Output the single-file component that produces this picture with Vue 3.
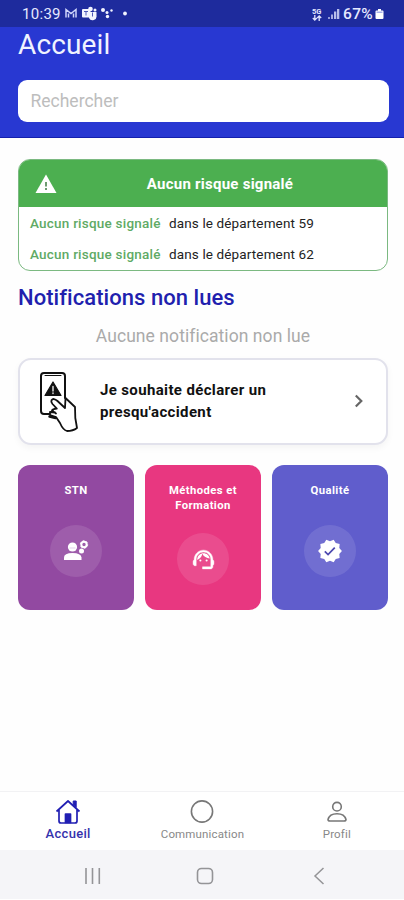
<script setup>
const departments = [59, 62]
const tiles = [
  { id: 'stn', title: 'STN' },
  { id: 'methods', title: 'Méthodes et Formation' },
  { id: 'quality', title: 'Qualité' },
]
</script>

<template>
  <div class="phone">
    <div class="status">
      <span class="clock">10:39</span>
      <svg class="notif-icons" width="66" height="16" viewBox="0 0 66 16">
        <g fill="none" stroke="#cfd5fb" stroke-width="1.500">
          <path d="M2 12.500V4.500l5 4 5-4v8M4.500 12.500V8.500M9.500 12.500V8.500" />
        </g>
        <g fill="#f2f4ff">
          <rect x="18" y="4" width="8.500" height="8.500" rx="1" />
          <circle cx="26.500" cy="4" r="2.300" />
          <circle cx="31" cy="5" r="1.500" />
          <path d="M25 7h7.500v3.500a4 4 0 0 1-7.500 2.500z" />
          <circle cx="39" cy="5" r="2" />
          <circle cx="43" cy="7.500" r="1.500" />
          <circle cx="47.500" cy="5.500" r="1.200" />
          <circle cx="43.500" cy="11.500" r="1.700" />
          <circle cx="61" cy="8.500" r="1.900" />
        </g>
        <path d="M20 6.500h4M22 6.500v4M28.500 7.500v4" stroke="#4d59b8" stroke-width="1" />
      </svg>
      <div class="status-right">
        <div class="network">
          <span>5G</span>
          <svg width="10" height="6" viewBox="0 0 10 6" fill="none" stroke="#dfe3ff" stroke-width="1.300"><path d="M2.800 0v5M.8 3l2 2 2-2M7.200 6V1M5.200 3l2-2 2 2" /></svg>
        </div>
        <svg width="13" height="12" viewBox="0 0 13 12" fill="#dfe3ff">
          <rect x="1" y="9" width="2" height="2" opacity=".6" />
          <rect x="4" y="6.500" width="2" height="4.500" opacity=".7" />
          <rect x="7" y="3.500" width="2.300" height="7.500" opacity=".8" />
          <rect x="10" y="1" width="2.300" height="10" opacity=".8" />
        </svg>
        <span class="percent">67%</span>
        <svg width="9" height="12" viewBox="0 0 9 12">
          <path d="M3 1h3v1.500h1.500q1 0 1 1V10q0 1-1 1h-6q-1 0-1-1V3.500q0-1 1-1H3z" fill="#fff" />
          <path d="M1.500 3.500h6V5h-6z" fill="#a9b1ec" />
        </svg>
      </div>
    </div>

    <header>
      <h1><span>Accueil</span></h1>
      <div class="search"><span>Rechercher</span></div>
    </header>

    <main>
      <section class="alert">
        <div class="alert-head">
          <svg width="22" height="20" viewBox="0 0 22 20">
            <path d="M11 .6 21.500 19H.5z" fill="#fff" />
            <path d="M11 8v4.500M11 14v2" stroke="#6d9a70" stroke-width="2" />
          </svg>
          <strong>Aucun risque signalé</strong>
        </div>
        <div v-for="d in departments" :key="d" class="alert-row">
          <b>Aucun risque signalé</b><span>dans le département {{ d }}</span>
        </div>
      </section>

      <h2><span>Notifications non lues</span></h2>
      <p class="empty"><span>Aucune notification non lue</span></p>

      <section class="declare">
        <svg class="hand" width="42" height="62" viewBox="0 0 42 62" fill="none" stroke="#111" stroke-linecap="round" stroke-linejoin="round">
          <path d="M27 28V6q0-3-3-3H6Q3 3 3 6v35q0 3 3 3h9" stroke-width="2" />
          <path d="M7 5.500h16" stroke-width="1" />
          <path d="M15 12 23 25.500H7z" fill="#111" stroke-width="1.200" />
          <path d="M15 16.500v4.500M15 22.800v.8" stroke="#fff" stroke-width="1.300" />
          <path d="M27.500 28l9.500 9 .3 11 1.700 10q-4 3-10 3-4-1-7-8l-4-6-6-2v-3l5 .5M27.500 28l-.5 10-7.500-7q-4-3.500-6-.8-.8 1.700 1 3.800l4.300 4.500q-4 .5-4.800 2l4 3" fill="#fff" stroke-width="1.800" />
          <path d="M11.500 46.500l6 1.500" stroke-width="2.500" />
        </svg>
        <strong>Je souhaite déclarer un<br />presqu'accident</strong>
        <svg width="10" height="14" viewBox="0 0 10 14" fill="none" stroke="#666" stroke-width="2.200">
          <path d="M1.800 1.500 7.300 7 1.800 12.500" />
        </svg>
      </section>

      <section class="tiles">
        <article v-for="t in tiles" :key="t.id" :class="t.id">
          <h3>{{ t.title }}</h3>
          <div class="disc">
            <svg v-if="t.id === 'stn'" width="26" height="22" viewBox="0 0 26 22" fill="#fff">
              <circle cx="9.500" cy="7" r="4.600" />
              <path d="M1 20v-2.500Q1 13 9.500 13t9 4.500V20z" />
              <circle cx="21" cy="4.500" r="2.700" fill="none" stroke="#fff" stroke-width="2" />
              <circle cx="21" cy="4.500" r="3.700" fill="none" stroke="#fff" stroke-width="1" stroke-dasharray="1.900 1.970" />
              <circle cx="18.500" cy="11" r="2.500" />
              <path d="M6.500 8h6" stroke="#dcc5e6" stroke-width=".8" />
            </svg>
            <svg v-else-if="t.id === 'methods'" width="25" height="25" viewBox="0 0 24 24" fill="#fff">
              <path d="M21 12.220C21 6.730 16.740 3 12 3c-4.690 0-9 3.650-9 9.280-.6.340-1 .98-1 1.720v2c0 1.100.9 2 2 2h1v-6.100C5 8.030 8.130 4.900 12 4.900s7 3.130 7 7V19h-8v2h8c1.100 0 2-.9 2-2v-1.220c.59-.31 1-.92 1-1.640v-2.300c0-.7-.41-1.310-1-1.620z" stroke="#fff" stroke-width=".4" />
              <circle cx="9" cy="13" r="1" /><circle cx="15" cy="13" r="1" />
              <path d="M18 11.030C17.520 8.180 15.040 6 12.050 6 9.020 6 5.760 8.510 6.020 12.450A8.070 8.070 0 0 0 10.880 6.560C12.190 9.190 14.880 11 18 11.030z" />
            </svg>
            <svg v-else width="26" height="26" viewBox="0 0 24 24">
              <path fill="#fff" d="m23 12-2.440-2.780.34-3.680-3.610-.82-1.890-3.180L12 3 8.600 1.540 6.710 4.720l-3.610.81.340 3.680L1 12l2.440 2.780-.34 3.690 3.610.82 1.890 3.180L12 21l3.400 1.460 1.890-3.180 3.610-.82-.34-3.680z" />
              <path d="m7.200 12.300 3 3 6.200-6.500" fill="none" stroke="#4d49b0" stroke-width="1.600" />
            </svg>
          </div>
        </article>
      </section>
    </main>

    <nav class="tabs">
      <div class="tab active">
        <svg width="26" height="26" viewBox="0 0 26 26" fill="none" stroke="#211fb3" stroke-width="1.700" stroke-linejoin="round">
          <path d="M1.500 12.500 13 2l11.500 10.500M4 11v11q0 2 2 2h14q2 0 2-2V11" />
          <path d="M18.200 2h3v6.500l-3-2.700z" fill="#211fb3" stroke-width="1" />
          <path d="M10.500 15h5v8.500h-5z" fill="#211fb3" />
        </svg>
        <span>Accueil</span>
      </div>
      <div class="tab">
        <svg width="26" height="26" viewBox="0 0 26 26" fill="none" stroke="#777" stroke-width="1.600"><circle cx="13" cy="12.500" r="10.600" /></svg>
        <span>Communication</span>
      </div>
      <div class="tab">
        <svg width="26" height="26" viewBox="0 0 26 26" fill="none" stroke="#777" stroke-width="1.600" stroke-linejoin="round">
          <circle cx="13" cy="7.700" r="4.300" />
          <path d="M6 22q-2 0-2-1.500C5 16.500 9 14.700 13 14.700s8 1.800 9 5.800q0 1.500-2 1.500z" />
        </svg>
        <span>Profil</span>
      </div>
    </nav>

    <footer class="system">
      <svg width="18" height="18" viewBox="0 0 18 18" stroke="#949497" stroke-width="1.600"><path d="M2 1v16M8.500 1v16M15.300 1v16" /></svg>
      <svg width="18" height="18" viewBox="0 0 18 18" fill="none" stroke="#949497" stroke-width="1.600"><rect x="1.500" y="1.500" width="15" height="15" rx="4" /></svg>
      <svg width="12" height="18" viewBox="0 0 12 18" fill="none" stroke="#949497" stroke-width="1.500"><path d="M10.500 1 2 9l8.500 8" /></svg>
    </footer>
  </div>
</template>

<style>
body { background: #fefefe; }
</style>

<style scoped>
* { box-sizing: border-box; }
h1, h2, h3, p { margin: 0; font-weight: 400; }
svg { display: block; flex: none; }
.phone { height: 900px; display: flex; flex-direction: column; font-family: Roboto, "Liberation Sans", sans-serif; color: #222; white-space: nowrap; overflow: hidden; background: #fefefe; }
.status { height: 27px; flex: none; display: flex; align-items: center; padding: 1px 20px 0 22px; background: #1e2b9d; color: #e6e9ff; }
.clock { width: 42px; font-size: 15px; letter-spacing: .3px; }
.notif-icons { margin-top: -2px; }
.status-right { margin-left: auto; display: flex; align-items: center; gap: 4px; }
.network { width: 11px; font-size: 7.500px; line-height: 7px; font-weight: 700; }
.network span { display: block; }
.percent { font-size: 15.500px; letter-spacing: .3px; font-weight: 500; margin: 0 -2px 0 -1px; }
header { height: 111px; flex: none; background: #2838d2; padding: 0 15px 0 18px; border-bottom: 1px solid #1420ad; }
h1 { height: 53px; padding-top: 1px; font-size: 28px; line-height: 34px; letter-spacing: .15px; color: #f0f3ff; }
.search { height: 42px; border-radius: 9px; background: #fff; padding: 0 12.500px; color: #bdbdbd; font-size: 17.500px; line-height: 42px; }
main { flex: 1; padding: 21px 16px 0 18px; }
.alert { height: 112px; border: 1px solid #7bb981; border-radius: 12px; overflow: hidden; background: #fff; }
.alert-head { height: 47px; display: flex; align-items: center; padding-left: 16px; background: #4caf50; color: #fff; }
.alert-head strong { flex: 1; text-align: center; font-size: 15px; letter-spacing: .25px; padding-left: 17px; margin-right: 21px; }
.alert-row { height: 31px; display: flex; align-items: center; padding-left: 11px; font-size: 13.500px; letter-spacing: .13px; }
.alert-row b { width: 139px; color: #60aa65; font-weight: 500; letter-spacing: .22px; }
h2 { margin-top: 12px; height: 30px; line-height: 30px; font-size: 22px; font-weight: 500; letter-spacing: .05px; color: #211fae; }
.empty { margin-top: 8px; height: 30px; line-height: 30px; font-size: 17.500px; letter-spacing: .07px; color: #aaa; text-align: center; }
.declare { margin-top: 7px; height: 87px; border: 2px solid #e2e2ec; border-radius: 13px; background: #fff; box-shadow: 0 3px 7px #0000000b; display: flex; align-items: center; padding: 0 22px 2px 18px; }
.declare strong { flex: 1; padding-left: 20px; font-size: 15px; line-height: 22px; letter-spacing: .36px; color: #111; }
.tiles { margin-top: 20px; display: grid; grid-template-columns: repeat(3, 116px); gap: 11px; }
article { height: 145px; border-radius: 12px; display: flex; flex-direction: column; align-items: center; padding-top: 18px; color: #fff; }
.stn { background: #9249a1; }
.methods { background: #e83780; }
.quality { background: #605dcc; }
h3 { width: 84px; white-space: normal; text-align: center; font-size: 11.300px; line-height: 15px; font-weight: 700; letter-spacing: .4px; }
.disc { width: 52px; height: 52px; margin-top: 27px; border-radius: 50%; background: #ffffff1c; display: grid; place-items: center; }
.methods .disc { margin-top: 20px; }
.tabs { height: 59px; flex: none; display: grid; grid-template-columns: repeat(3, 1fr); padding-left: 1px; border-top: 1px solid #f2f2f4; background: #fff; }
.tab { display: flex; flex-direction: column; align-items: center; padding-top: 7px; font-size: 11.500px; line-height: 19px; letter-spacing: .15px; color: #888; }
.active { font-size: 13px; line-height: 17px; letter-spacing: .3px; font-weight: 500; color: #3532ac; }
.system { height: 50px; flex: none; background: #f5f5f8; border-bottom: 1px solid #fff; display: grid; grid-template-columns: 112px 117px 12px; align-items: center; padding: 3px 79px 0 84px; }
</style>
